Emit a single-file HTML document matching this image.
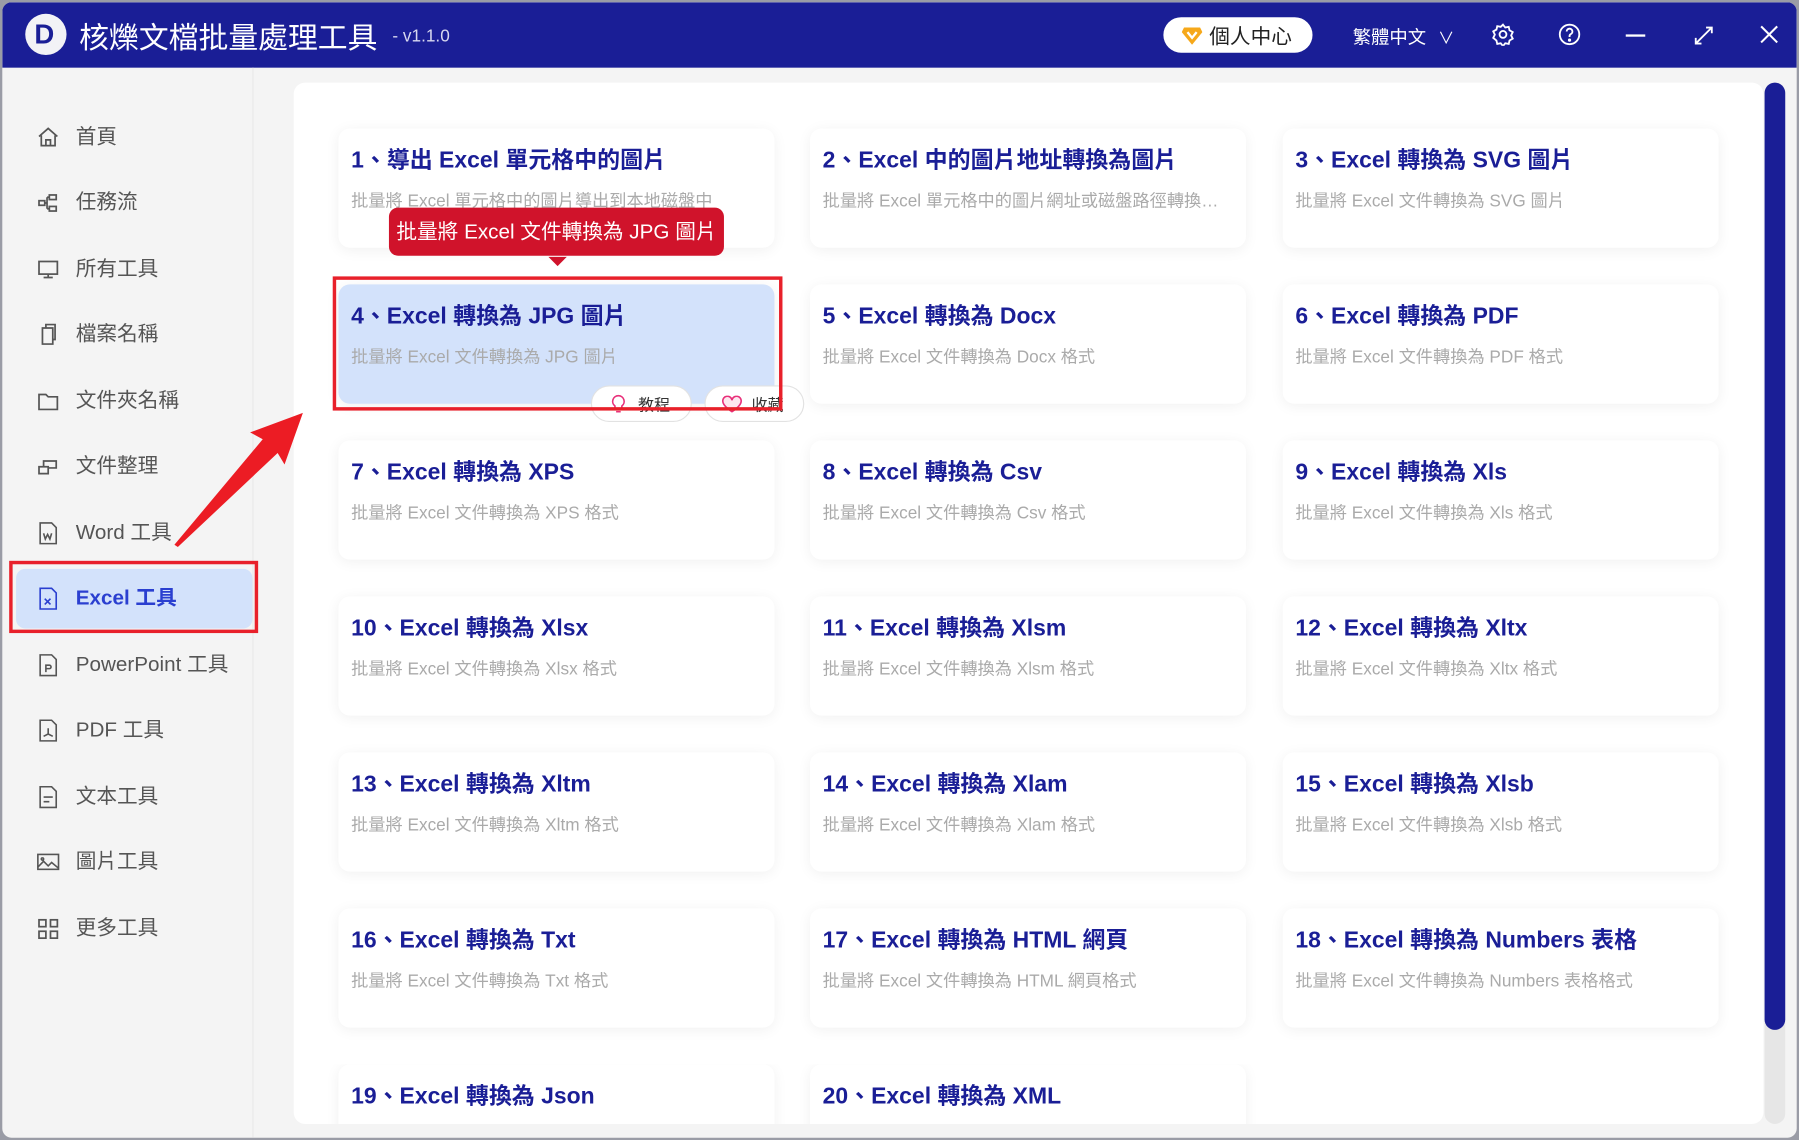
<!DOCTYPE html>
<html><head><meta charset="utf-8">
<style>
html,body{margin:0;padding:0;width:1799px;height:1140px;overflow:hidden;background:#9a9ca6;}
#stage{position:absolute;left:0;top:0;width:1568px;height:994px;transform:scale(1.14732,1.14688);transform-origin:0 0;font-family:"Liberation Sans","Noto Sans CJK TC",sans-serif;}
.win{position:absolute;left:2px;top:2px;width:1564px;height:990px;background:#f4f4f4;border-radius:8px;overflow:hidden;}
.hdr{position:absolute;left:0;top:0;right:0;height:57px;background:#1a1e96;color:#fff;}
.logo{position:absolute;left:20px;top:10px;width:36px;height:36px;border-radius:50%;background:#f2f2f6;}
.logo span{position:absolute;left:8px;top:5px;font:900 24px "Liberation Sans",sans-serif;color:#1a1e96;}
.title{position:absolute;left:67px;top:11px;font-size:26px;letter-spacing:0px;}
.ver{position:absolute;left:340px;top:21px;font-size:15px;color:#d8d8f0;}
.pc{position:absolute;left:1012px;top:13px;width:130px;height:31px;border-radius:16px;background:#fff;color:#222;font-size:18px;}
.pc span{position:absolute;left:40px;top:3px;}
.lang{position:absolute;left:1177px;top:17px;font-size:16px;}
.side{position:absolute;left:0;top:57px;width:218px;bottom:0;border-right:1px solid #e8e8e8;}
.item{position:absolute;left:30px;height:30px;font-size:18px;color:#555;}
.item svg{position:absolute;left:0;top:5px;}
.item span{position:absolute;left:34px;top:0px;white-space:nowrap;}
.sel{position:absolute;left:12px;top:437px;width:206px;height:52px;background:#d3e2fb;border-radius:8px;}
.redbox{position:absolute;border:3px solid #e8202a;}
.panel{position:absolute;left:254px;top:70px;width:1281px;height:908px;background:#fff;border-radius:10px;}
.card{position:absolute;width:380px;height:104px;background:#fff;border-radius:10px;box-shadow:0 2px 12px rgba(0,0,0,0.06);}
.card b{position:absolute;left:11px;top:11px;font-size:20px;color:#1a1e96;white-space:nowrap;}
.card i{position:absolute;left:11px;top:52px;font-size:15px;font-style:normal;color:#aaa;white-space:nowrap;overflow:hidden;width:360px;text-overflow:ellipsis;}
.sb{position:absolute;left:1536px;top:70px;width:18px;height:908px;background:#e6e6e6;border-radius:9px;}
.sbt{position:absolute;left:1536px;top:70px;width:18px;height:826px;background:#1a1e96;border-radius:9px;}
.tip{position:absolute;left:339px;top:181px;width:292px;height:42px;background:#d0132b;border-radius:8px;color:#fff;font-size:18px;text-align:center;line-height:42px;}
.tip:after{content:"";position:absolute;left:139px;bottom:-9px;border:8px solid transparent;border-top-color:#d0132b;border-bottom:0;}
.pill{position:absolute;top:336px;height:30px;border:1px solid #e2e2e2;border-radius:16px;background:#fff;font-size:14px;color:#333;}
</style></head><body><div id="stage">
<div class="win">
<div class="hdr">
 <div class="logo"><span>D</span></div>
 <div class="title">核爍文檔批量處理工具</div>
 <div class="ver">- v1.1.0</div>
 <div class="pc"><svg style="position:absolute;left:16px;top:8px" width="18" height="16" viewBox="0 0 18 16"><path d="M2 1h14l2 4-9 11L0 5z" fill="#f6a81a"/><path d="M5 5l4 5 4-5" stroke="#fff" stroke-width="2" fill="none"/></svg><span>個人中心</span></div>
 <div class="lang">繁體中文 <span style="font-size:14px;margin-left:6px">∨</span></div>
 <svg style="position:absolute;left:1298px;top:18px" width="20" height="20" viewBox="0 0 20 20" fill="none" stroke="#fff" stroke-width="1.6"><path d="M10 1.5l2 2.5 3-.6.7 3 2.8 1.6-1.4 2.9 1.4 2.8-2.8 1.6-.7 3-3-.6-2 2.5-2-2.5-3 .6-.7-3L1.5 13l1.4-2.8L1.5 7.4l2.8-1.6.7-3 3 .6z"/><circle cx="10" cy="10" r="3"/></svg>
 <svg style="position:absolute;left:1356px;top:18px" width="20" height="20" viewBox="0 0 20 20" fill="none" stroke="#fff" stroke-width="1.6"><circle cx="10" cy="10" r="8.5"/><path d="M7.5 7.5a2.5 2.5 0 1 1 3.5 2.3c-.7.4-1 .9-1 1.7v.8"/><circle cx="10" cy="15" r=".6" fill="#fff"/></svg>
 <div style="position:absolute;left:1415px;top:28px;width:17px;height:2px;background:#fff"></div>
 <svg style="position:absolute;left:1474px;top:20px" width="18" height="18" viewBox="0 0 18 18" fill="none" stroke="#fff" stroke-width="1.6"><path d="M2 16L16 2M11 2h5v5M2 11v5h5"/></svg>
 <svg style="position:absolute;left:1531px;top:19px" width="18" height="18" viewBox="0 0 18 18" stroke="#fff" stroke-width="1.8"><path d="M2 2l14 14M16 2L2 16"/></svg>
</div>
<div class="side">
 <div class="sel"></div>
 <div class="item" style="top:46px"><svg width="20" height="20" viewBox="0 0 20 20" fill="none" stroke="#555" stroke-width="1.5"><path d="M2 9l8-7 8 7M4 8v9h12V8M8 17v-5h4v5"/></svg><span>首頁</span></div>
 <div class="item" style="top:103px"><svg width="20" height="20" viewBox="0 0 20 20" fill="none" stroke="#555" stroke-width="1.5"><rect x="2" y="8" width="5" height="4"/><rect x="11" y="3" width="6" height="4"/><rect x="11" y="13" width="6" height="4"/><path d="M7 10h2M9 5v10M9 5h2M9 15h2"/></svg><span>任務流</span></div>
 <div class="item" style="top:161px"><svg width="20" height="20" viewBox="0 0 20 20" fill="none" stroke="#555" stroke-width="1.5"><rect x="2" y="3" width="16" height="11"/><path d="M10 14v3M6 17h8"/></svg><span>所有工具</span></div>
 <div class="item" style="top:218px"><svg width="20" height="20" viewBox="0 0 20 20" fill="none" stroke="#555" stroke-width="1.5"><path d="M5 4h9v14H5zM8 4V1h8v13h-2"/></svg><span>檔案名稱</span></div>
 <div class="item" style="top:276px"><svg width="20" height="20" viewBox="0 0 20 20" fill="none" stroke="#555" stroke-width="1.5"><path d="M2 4h6l2 2h8v11H2z"/></svg><span>文件夾名稱</span></div>
 <div class="item" style="top:333px"><svg width="20" height="20" viewBox="0 0 20 20" fill="none" stroke="#555" stroke-width="1.5"><path d="M2 10h8v6H2zM6 10V5h11v6h-7"/></svg><span>文件整理</span></div>
 <div class="item" style="top:391px"><svg width="20" height="20" viewBox="0 0 20 20" fill="none" stroke="#555" stroke-width="1.4"><path d="M3 1h10l4 4v14H3z"/><path d="M6 10l1.5 5 2-4 2 4L13 10"/></svg><span>Word 工具</span></div>
 <div class="item" style="top:448px;color:#2a3fd0;font-weight:bold"><svg width="20" height="20" viewBox="0 0 20 20" fill="none" stroke="#2a3fd0" stroke-width="1.4"><path d="M3 1h10l4 4v14H3z"/><path d="M7 10l5 5M12 10l-5 5"/></svg><span>Excel 工具</span></div>
 <div class="item" style="top:506px"><svg width="20" height="20" viewBox="0 0 20 20" fill="none" stroke="#555" stroke-width="1.4"><path d="M3 1h10l4 4v14H3z"/><path d="M8 16v-6h3a1.5 1.5 0 0 1 0 3H8"/></svg><span>PowerPoint 工具</span></div>
 <div class="item" style="top:563px"><svg width="20" height="20" viewBox="0 0 20 20" fill="none" stroke="#555" stroke-width="1.4"><path d="M3 1h10l4 4v14H3z"/><path d="M10 8v5l-4 2M10 13l4 2"/></svg><span>PDF 工具</span></div>
 <div class="item" style="top:621px"><svg width="20" height="20" viewBox="0 0 20 20" fill="none" stroke="#555" stroke-width="1.4"><path d="M3 1h10l4 4v14H3z"/><path d="M6 10h8M6 14h5"/></svg><span>文本工具</span></div>
 <div class="item" style="top:678px"><svg width="20" height="20" viewBox="0 0 20 20" fill="none" stroke="#555" stroke-width="1.4"><rect x="1" y="3" width="18" height="13"/><path d="M1 14l5-5 4 4 3-3 6 5"/><circle cx="5" cy="7" r="1"/></svg><span>圖片工具</span></div>
 <div class="item" style="top:736px"><svg width="20" height="20" viewBox="0 0 20 20" fill="none" stroke="#555" stroke-width="1.5"><rect x="2" y="2" width="6" height="6"/><rect x="12" y="2" width="6" height="6"/><rect x="2" y="12" width="6" height="6"/><rect x="12" y="12" width="6" height="6"/></svg><span>更多工具</span></div>
</div>
<div class="panel"></div>
<div class="sb"></div><div class="sbt"></div>
</div>
<div class="redbox" style="left:8px;top:489px;width:211px;height:57px"></div>

<div class="card" style="left:295px;top:112px"><b>1、導出 Excel 單元格中的圖片</b><i>批量將 Excel 單元格中的圖片導出到本地磁盤中</i></div>
<div class="card" style="left:706px;top:112px"><b>2、Excel 中的圖片地址轉換為圖片</b><i>批量將 Excel 單元格中的圖片網址或磁盤路徑轉換為圖片</i></div>
<div class="card" style="left:1118px;top:112px"><b>3、Excel 轉換為 SVG 圖片</b><i>批量將 Excel 文件轉換為 SVG 圖片</i></div>
<div class="card" style="left:295px;top:248px;background:#d3e2fb"><b>4、Excel 轉換為 JPG 圖片</b><i>批量將 Excel 文件轉換為 JPG 圖片</i></div>
<div class="card" style="left:706px;top:248px"><b>5、Excel 轉換為 Docx</b><i>批量將 Excel 文件轉換為 Docx 格式</i></div>
<div class="card" style="left:1118px;top:248px"><b>6、Excel 轉換為 PDF</b><i>批量將 Excel 文件轉換為 PDF 格式</i></div>
<div class="card" style="left:295px;top:384px"><b>7、Excel 轉換為 XPS</b><i>批量將 Excel 文件轉換為 XPS 格式</i></div>
<div class="card" style="left:706px;top:384px"><b>8、Excel 轉換為 Csv</b><i>批量將 Excel 文件轉換為 Csv 格式</i></div>
<div class="card" style="left:1118px;top:384px"><b>9、Excel 轉換為 Xls</b><i>批量將 Excel 文件轉換為 Xls 格式</i></div>
<div class="card" style="left:295px;top:520px"><b>10、Excel 轉換為 Xlsx</b><i>批量將 Excel 文件轉換為 Xlsx 格式</i></div>
<div class="card" style="left:706px;top:520px"><b>11、Excel 轉換為 Xlsm</b><i>批量將 Excel 文件轉換為 Xlsm 格式</i></div>
<div class="card" style="left:1118px;top:520px"><b>12、Excel 轉換為 Xltx</b><i>批量將 Excel 文件轉換為 Xltx 格式</i></div>
<div class="card" style="left:295px;top:656px"><b>13、Excel 轉換為 Xltm</b><i>批量將 Excel 文件轉換為 Xltm 格式</i></div>
<div class="card" style="left:706px;top:656px"><b>14、Excel 轉換為 Xlam</b><i>批量將 Excel 文件轉換為 Xlam 格式</i></div>
<div class="card" style="left:1118px;top:656px"><b>15、Excel 轉換為 Xlsb</b><i>批量將 Excel 文件轉換為 Xlsb 格式</i></div>
<div class="card" style="left:295px;top:792px"><b>16、Excel 轉換為 Txt</b><i>批量將 Excel 文件轉換為 Txt 格式</i></div>
<div class="card" style="left:706px;top:792px"><b>17、Excel 轉換為 HTML 網頁</b><i>批量將 Excel 文件轉換為 HTML 網頁格式</i></div>
<div class="card" style="left:1118px;top:792px"><b>18、Excel 轉換為 Numbers 表格</b><i>批量將 Excel 文件轉換為 Numbers 表格格式</i></div>
<div style="position:absolute;left:254px;top:928px;width:1281px;height:52px;overflow:hidden">
 <div class="card" style="left:41px;top:0"><b>19、Excel 轉換為 Json</b></div>
 <div class="card" style="left:452px;top:0"><b>20、Excel 轉換為 XML</b></div>
</div>

<div class="pill" style="left:515px;width:86px"><svg style="position:absolute;left:16px;top:7px" width="14" height="17" viewBox="0 0 14 17" fill="none" stroke="#e8307a" stroke-width="1.4"><path d="M7 1a5 5 0 0 0-3 9v3h6v-3a5 5 0 0 0-3-9zM5 15h4"/></svg><span style="position:absolute;left:40px;top:6px">教程</span></div>
<div class="pill" style="left:614px;width:85px"><svg style="position:absolute;left:14px;top:8px" width="18" height="15" viewBox="0 0 18 15" fill="#fde6ee" stroke="#e8307a" stroke-width="1.4"><path d="M9 14S1 9 1 5a4 4 0 0 1 8-1 4 4 0 0 1 8 1c0 4-8 9-8 9z"/></svg><span style="position:absolute;left:40px;top:6px">收藏</span></div>

<div class="redbox" style="left:290px;top:241px;width:386px;height:111px"></div>
<div class="tip">批量將 Excel 文件轉換為 JPG 圖片</div>
<svg style="position:absolute;left:0;top:0" width="300" height="500"><polygon points="152,475 229,383 218,377 264,360 248,405 242,395 155,477" fill="#ec1c24"/></svg>
</div></body></html>
